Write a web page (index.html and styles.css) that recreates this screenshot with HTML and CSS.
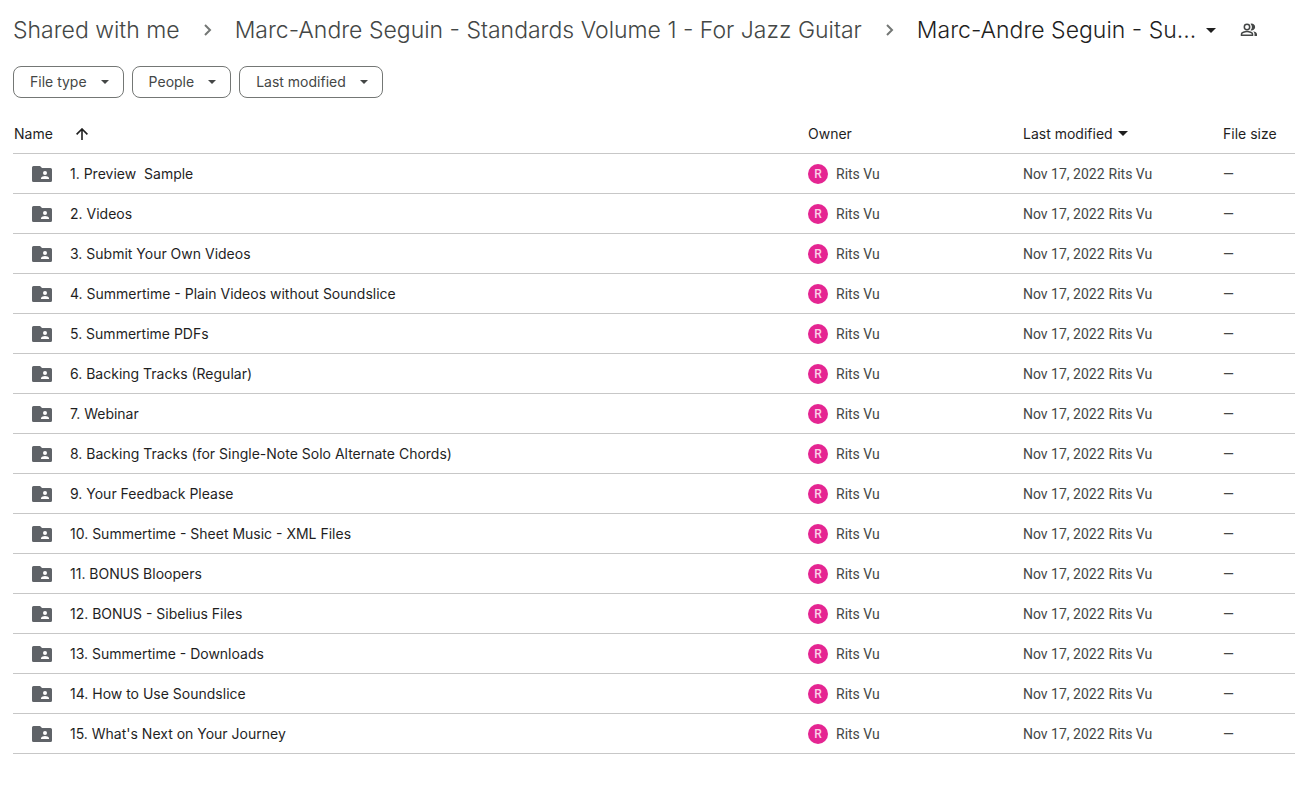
FILE: index.html
```
<!DOCTYPE html>
<html lang="en">
<head>
<meta charset="utf-8">
<title>Shared with me</title>
<link rel="stylesheet" href="styles.css">
</head>
<body>
<svg class="sprite" aria-hidden="true">
  <symbol id="folder" viewBox="0 0 20 16"><path fill="#5f6368" d="M1.500 0H8l2 2h8.500A1.500 1.500 0 0 1 20 3.500v11a1.500 1.500 0 0 1-1.500 1.500h-17A1.500 1.500 0 0 1 0 14.500v-13A1.500 1.500 0 0 1 1.500 0z"/><circle cx="13" cy="7" r="2" fill="#fff"/><path fill="#fff" d="M9 13v-1c0-1.300 2.700-2 4-2s4 .7 4 2v1z"/></symbol>
  <symbol id="caret" viewBox="0 0 10 5"><path fill="currentColor" d="M0 0h10L5 5z"/></symbol>
  <symbol id="chevron" viewBox="0 0 8 12"><path fill="none" stroke="currentColor" stroke-width="2" d="M1 1l5 5-5 5"/></symbol>
</svg>
<nav class="crumbs" aria-label="Breadcrumb">
  <a class="crumb" href="#">Shared with me</a>
  <svg class="chevron"><use href="#chevron"/></svg>
  <a class="crumb" href="#">Marc-Andre Seguin - Standards Volume 1 - For Jazz Guitar</a>
  <svg class="chevron"><use href="#chevron"/></svg>
  <button class="crumb current" type="button">Marc-Andre Seguin - Su...<svg class="caret"><use href="#caret"/></svg></button>
  <button class="share" type="button" aria-label="Manage access"><svg viewBox="0 0 18 14" fill="none" stroke="currentColor" stroke-width="1.500"><circle cx="7" cy="4" r="2.700"/><path d="M1.500 12.300v-1.200c0-1.500 3.300-2.500 5.500-2.500s5.500 1 5.500 2.500v1.200z"/><path fill="currentColor" stroke="none" d="M10.500 7.300a5 5 0 0 0 0-6.600 3.500 3.500 0 1 1 0 6.600zM13 8.300c2.300.5 4 1.500 4 2.900V13h-2.500v-1.900c0-1.100-.6-2-1.500-2.800z"/></svg></button>
</nav>
<div class="filters">
  <button class="chip" type="button">File type<svg class="caret small"><use href="#caret"/></svg></button>
  <button class="chip" type="button">People<svg class="caret small"><use href="#caret"/></svg></button>
  <button class="chip" type="button">Last modified<svg class="caret small"><use href="#caret"/></svg></button>
</div>
<table class="files">
<thead><tr>
  <th class="name" scope="col"><button class="sort" type="button">Name<svg class="arrow" viewBox="0 0 12 12" fill="none" stroke="currentColor" stroke-width="1.600"><path d="M6 12V1.200M.6 6.400L6 1l5.400 5.400"/></svg></button></th>
  <th class="owner" scope="col">Owner</th>
  <th class="modified" scope="col"><button class="sort" type="button">Last modified<svg class="caret"><use href="#caret"/></svg></button></th>
  <th class="size" scope="col">File size</th>
</tr></thead>
<tbody>
<tr><td><div class="file"><svg class="folder"><use href="#folder"/></svg>1. Preview&nbsp; Sample</div></td><td><div class="person"><span class="avatar">R</span>Rits Vu</div></td><td><div class="edit"><span>Nov 17, 2022</span><span>Rits Vu</span></div></td><td>—</td></tr>
<tr><td><div class="file"><svg class="folder"><use href="#folder"/></svg>2. Videos</div></td><td><div class="person"><span class="avatar">R</span>Rits Vu</div></td><td><div class="edit"><span>Nov 17, 2022</span><span>Rits Vu</span></div></td><td>—</td></tr>
<tr><td><div class="file"><svg class="folder"><use href="#folder"/></svg>3. Submit Your Own Videos</div></td><td><div class="person"><span class="avatar">R</span>Rits Vu</div></td><td><div class="edit"><span>Nov 17, 2022</span><span>Rits Vu</span></div></td><td>—</td></tr>
<tr><td><div class="file"><svg class="folder"><use href="#folder"/></svg>4. Summertime - Plain Videos without Soundslice</div></td><td><div class="person"><span class="avatar">R</span>Rits Vu</div></td><td><div class="edit"><span>Nov 17, 2022</span><span>Rits Vu</span></div></td><td>—</td></tr>
<tr><td><div class="file"><svg class="folder"><use href="#folder"/></svg>5. Summertime PDFs</div></td><td><div class="person"><span class="avatar">R</span>Rits Vu</div></td><td><div class="edit"><span>Nov 17, 2022</span><span>Rits Vu</span></div></td><td>—</td></tr>
<tr><td><div class="file"><svg class="folder"><use href="#folder"/></svg>6. Backing Tracks (Regular)</div></td><td><div class="person"><span class="avatar">R</span>Rits Vu</div></td><td><div class="edit"><span>Nov 17, 2022</span><span>Rits Vu</span></div></td><td>—</td></tr>
<tr><td><div class="file"><svg class="folder"><use href="#folder"/></svg>7. Webinar</div></td><td><div class="person"><span class="avatar">R</span>Rits Vu</div></td><td><div class="edit"><span>Nov 17, 2022</span><span>Rits Vu</span></div></td><td>—</td></tr>
<tr><td><div class="file"><svg class="folder"><use href="#folder"/></svg>8. Backing Tracks (for Single-Note Solo Alternate Chords)</div></td><td><div class="person"><span class="avatar">R</span>Rits Vu</div></td><td><div class="edit"><span>Nov 17, 2022</span><span>Rits Vu</span></div></td><td>—</td></tr>
<tr><td><div class="file"><svg class="folder"><use href="#folder"/></svg>9. Your Feedback Please</div></td><td><div class="person"><span class="avatar">R</span>Rits Vu</div></td><td><div class="edit"><span>Nov 17, 2022</span><span>Rits Vu</span></div></td><td>—</td></tr>
<tr><td><div class="file"><svg class="folder"><use href="#folder"/></svg>10. Summertime - Sheet Music - XML Files</div></td><td><div class="person"><span class="avatar">R</span>Rits Vu</div></td><td><div class="edit"><span>Nov 17, 2022</span><span>Rits Vu</span></div></td><td>—</td></tr>
<tr><td><div class="file"><svg class="folder"><use href="#folder"/></svg>11. BONUS Bloopers</div></td><td><div class="person"><span class="avatar">R</span>Rits Vu</div></td><td><div class="edit"><span>Nov 17, 2022</span><span>Rits Vu</span></div></td><td>—</td></tr>
<tr><td><div class="file"><svg class="folder"><use href="#folder"/></svg>12. BONUS - Sibelius Files</div></td><td><div class="person"><span class="avatar">R</span>Rits Vu</div></td><td><div class="edit"><span>Nov 17, 2022</span><span>Rits Vu</span></div></td><td>—</td></tr>
<tr><td><div class="file"><svg class="folder"><use href="#folder"/></svg>13. Summertime - Downloads</div></td><td><div class="person"><span class="avatar">R</span>Rits Vu</div></td><td><div class="edit"><span>Nov 17, 2022</span><span>Rits Vu</span></div></td><td>—</td></tr>
<tr><td><div class="file"><svg class="folder"><use href="#folder"/></svg>14. How to Use Soundslice</div></td><td><div class="person"><span class="avatar">R</span>Rits Vu</div></td><td><div class="edit"><span>Nov 17, 2022</span><span>Rits Vu</span></div></td><td>—</td></tr>
<tr><td><div class="file"><svg class="folder"><use href="#folder"/></svg>15. What's Next on Your Journey</div></td><td><div class="person"><span class="avatar">R</span>Rits Vu</div></td><td><div class="edit"><span>Nov 17, 2022</span><span>Rits Vu</span></div></td><td>—</td></tr>
</tbody>
</table>
</body>
</html>
```
FILE: styles.css
```
* { box-sizing: border-box; }
body {
  margin: 0;
  padding: 12px 0 0 13px;
  background: #fff;
  color: #1f1f1f;
  font: 14px/20px Inter, Roboto, sans-serif;
}
button {
  margin: 0;
  padding: 0;
  border: 0;
  background: none;
  color: inherit;
  font: inherit;
  cursor: pointer;
}
svg { display: block; flex: none; }
.sprite { position: absolute; width: 0; height: 0; }
.crumbs {
  display: flex;
  align-items: center;
  height: 36px;
  color: #444746;
  white-space: nowrap;
}
.crumb {
  color: inherit;
  font-size: 23px;
  font-weight: 300;
  line-height: 32px;
  text-decoration: none;
}
.current { display: flex; align-items: center; gap: 10px; color: #1f1f1f; }
.chevron { width: 8px; height: 12px; margin: 0 23px 0 24px; color: #747775; }
.caret { width: 10px; height: 5px; }
.small { width: 8px; height: 4px; }
.share { margin-left: 24px; }
.share svg { width: 18px; height: 14px; }
.filters { display: flex; gap: 8px; margin-top: 18px; }
.chip {
  display: flex;
  align-items: center;
  gap: 14px;
  height: 32px;
  padding: 0 14px 0 16px;
  border: 1px solid #747775;
  border-radius: 8px;
  color: #444746;
}
.files {
  width: 100%;
  margin-top: 16px;
  border-collapse: separate;
  border-spacing: 0;
  table-layout: fixed;
  color: #444746;
}
th, td {
  height: 40px;
  padding: 0;
  border-bottom: 1px solid #c7c7c7;
  text-align: left;
  vertical-align: middle;
  white-space: nowrap;
}
td { font-family: Roboto, sans-serif; }
th { color: #1f1f1f; font-weight: 400; }
th.name { padding-left: 1px; }
.owner { width: 215px; }
.modified { width: 200px; }
.size { width: 72px; }
.sort { display: flex; align-items: center; gap: 5px; }
.name .sort { gap: 23px; }
.arrow { width: 12px; height: 12px; }
.file {
  display: flex;
  align-items: center;
  gap: 18px;
  padding-left: 19px;
  color: #1f1f1f;
  font-family: Inter, sans-serif;
}
.folder { width: 20px; height: 16px; }
.person { display: flex; align-items: center; gap: 8px; }
.avatar {
  width: 20px;
  height: 20px;
  border-radius: 50%;
  background: #e52592;
  color: #fbd3e9;
  font-size: 12px;
  font-weight: 500;
  text-align: center;
}
.edit { display: flex; gap: 4px; }
```
